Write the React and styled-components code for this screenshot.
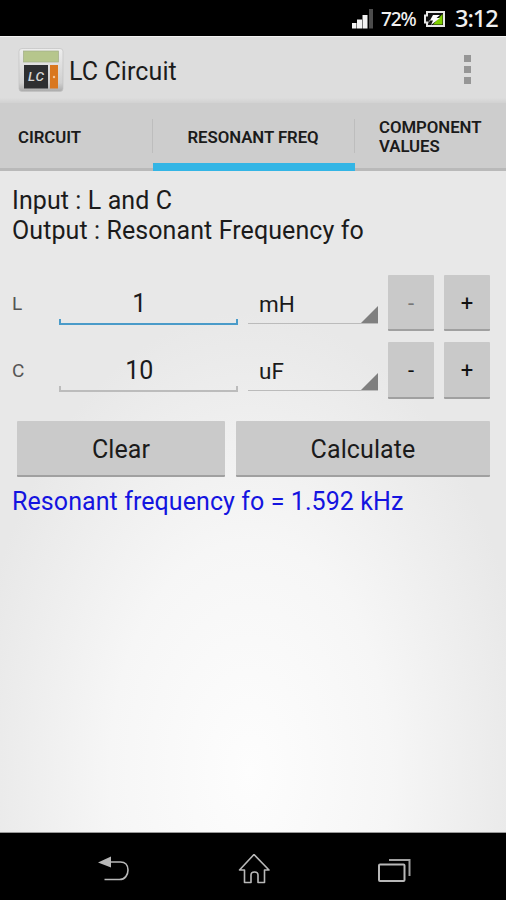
import styled, { createGlobalStyle } from "styled-components";
import { useState } from "react";

const tabs = [
    { id: "circuit", label: "CIRCUIT", width: 153, pad: 18 },
    { id: "freq", label: "RESONANT FREQ", width: 202, pad: 34.5 },
    { id: "values", label: "COMPONENT VALUES", width: 151, pad: 24 },
];

export default function App(){
    const [tab,setTab] = useState("freq");
    return(
    <>
        <GlobalStyle/>
        <Phone>
            <StatusBar>
                <Signal/>
                <Percent>72%</Percent>
                <Battery/>
                <Clock>3:12</Clock>
            </StatusBar>
            <ActionBar>
                <Logo/>
                <Title>LC Circuit</Title>
                <Overflow><Dot/><Dot/><Dot/></Overflow>
            </ActionBar>
            <Tabs>
                {tabs.map((t)=>(
                    <Tab key={t.id} $w={t.width} $pad={t.pad} $active={tab===t.id} onClick={()=>{setTab(t.id)}}>
                        <TabLabel>{t.label}</TabLabel>
                    </Tab>
                ))}
            </Tabs>
            <Content>
                <Intro>Input : L and C<br/>Output : Resonant Frequency fo</Intro>
                <Rows>
                    <ValueRow name="L" value="1" unit="mH" focused dimMinus/>
                    <ValueRow name="C" value="10" unit="uF"/>
                </Rows>
                <Actions>
                    <Button>Clear</Button>
                    <Button>Calculate</Button>
                </Actions>
                <Result>Resonant frequency fo = 1.592 kHz</Result>
            </Content>
            <NavBar>
                <NavIcons/>
            </NavBar>
        </Phone>
    </>
    );
}

function ValueRow({name,value,unit,focused,dimMinus}){
    return(
        <Row>
            <Name>{name}</Name>
            <Field $focused={focused}>
                <Value>{value}</Value>
                <Bracket/>
            </Field>
            <Spinner>
                <Unit>{unit}</Unit>
                <Corner viewBox="0 0 16 16"><path d="M16 0V16H0Z" fill="#7f7f7f"/></Corner>
            </Spinner>
            <Step $dim={dimMinus}>-</Step>
            <Step>+</Step>
        </Row>
    );
}

function Signal(){
    return(
        <svg width="22" height="21" viewBox="0 0 22 21">
            <path d="M0 15h4.5v5.5H0z M5 11.5H10v9H5z M10.500 7h5v13.5h-5z" fill="#f2f2f2"/>
            <path d="M17 1h4v19.5h-4z" fill="#4c4c4c"/>
        </svg>
    );
}

function Battery(){
    return(
        <BatterySvg width="23" height="18" viewBox="0 0 23 18">
            <path d="M4 2H21V16H4V12.500H2V5.500H4Z" fill="#111" stroke="#e8e8e8" strokeWidth="2"/>
            <path d="M19.500 4V14.500H10Z" fill="#7fd000"/>
            <path d="M5 14L10 5H17L13.500 8H17L8 15L10 10.500H6Z" fill="#fff"/>
        </BatterySvg>
    );
}

function Logo(){
    return(
        <LogoSvg width="46" height="46" viewBox="0 0 46 46">
            <defs>
                <linearGradient id="case" x1="0" y1="0" x2="0" y2="1">
                    <stop offset="0" stopColor="#eeeeee"/>
                    <stop offset=".8" stopColor="#d0d0d0"/>
                    <stop offset="1" stopColor="#aaaaaa"/>
                </linearGradient>
            </defs>
            <rect x="1" y="1.500" width="44" height="43" rx="3" fill="url(#case)" stroke="#c2c2c2" strokeWidth=".7"/>
            <rect x="5.500" y="4" width="35" height="11" fill="#b6c68c" stroke="#a2ad86" strokeWidth=".7"/>
            <rect x="6" y="18" width="24" height="23.500" fill="#2e2f31"/>
            <rect x="32" y="18" width="8" height="23.500" fill="#d9771f"/>
            <circle cx="36" cy="30" r="1.200" fill="#f6c79b"/>
            <text x="10" y="34" fontFamily="Roboto, sans-serif" fontSize="13.500" fontWeight="500" fontStyle="italic" textLength="16" fill="#d5d5d5">LC</text>
        </LogoSvg>
    );
}

function NavIcons(){
    return(
        <>
            <svg width="34" height="28" viewBox="0 0 34 28">
                <path d="M13 6H23.500C28 6 31 9 31 14S28 23.500 22.500 23.500H7.500" fill="none" stroke="#b8b8b8" strokeWidth="1.600"/>
                <path d="M1 6.500L14 .5V11.500Z" fill="#b8b8b8"/>
            </svg>
            <svg width="34" height="32" viewBox="0 0 34 32">
                <path d="M16 .5L31 16H26.500V28.500H20V21Q20 18 16.500 18T13 21V28.500H6.500V16H1.500Z" fill="none" stroke="#b8b8b8" strokeWidth="1.600" strokeLinejoin="round"/>
            </svg>
            <svg width="34" height="26" viewBox="0 0 34 26">
                <rect x="1" y="7.500" width="25.500" height="16.500" rx="1" fill="none" stroke="#b8b8b8" strokeWidth="2"/>
                <path d="M11 3H31.500V19" fill="none" stroke="#a0a0a0" strokeWidth="2"/>
            </svg>
        </>
    );
}

const GlobalStyle=createGlobalStyle`
    *{
        box-sizing: border-box;
    }
    body{
        margin: 0;
        background: #000;
        font-family: Roboto, "Liberation Sans", sans-serif;
    }
    button{
        font-family: inherit;
        border: 0;
        padding: 0;
    }
`
const Phone=styled.div`
    width: 506px;
    height: 900px;
    display: flex;
    flex-direction: column;
    overflow: hidden;
    color: #1b1b1b;
`
const StatusBar=styled.header`
    height: 36px;
    display: flex;
    align-items: center;
    justify-content: flex-end;
    padding-right: 7px;
    background: #000;
    color: #f0f0f0;
    font-family: "Noto Sans", sans-serif;
    font-weight: 500;
`
const Percent=styled.span`
    width: 35px;
    margin-left: 7px;
    padding-top: 1px;
    font-size: 19px;
    letter-spacing: -1.100px;
    white-space: nowrap;
`
const BatterySvg=styled.svg`
    margin-left: 7px;
    margin-top: 1px;
`
const Clock=styled.span`
    width: 44px;
    margin-left: 9px;
    font-size: 23.500px;
    letter-spacing: -1px;
    white-space: nowrap;
`
const ActionBar=styled.div`
    height: 67px;
    display: flex;
    align-items: center;
    padding: 0 34px 0 18px;
    background: linear-gradient(#ddd 92%, #d2d2d2);
    border-top: 1px solid #f2f2f2;
`
const LogoSvg=styled.svg`
    flex: none;
`
const Title=styled.h1`
    margin: 3px auto 0 5px;
    font-size: 25px;
    font-weight: 400;
    letter-spacing: .1px;
`
const Overflow=styled.div`
    display: flex;
    flex-direction: column;
    gap: 4px;
    padding-right: 1px;
    padding-bottom: 2px;
`
const Dot=styled.span`
    width: 7px;
    height: 7px;
    background: #969696;
`
const Tabs=styled.nav`
    height: 68px;
    display: flex;
    background: #cdcdcd;
`
const Tab=styled.button`
    width: ${({$w})=>$w}px;
    height: 68px;
    display: flex;
    align-items: center;
    padding-left: ${({$pad})=>$pad}px;
    padding-top: ${({$active})=>($active?"9px":"4px")};
    text-align: left;
    color: #1b1b1b;
    border-bottom: ${({$active})=>($active?"8px solid #33b5e5":"3px solid #b9b9b9")};
    background: linear-gradient(#bdbdbd,#bdbdbd) right 0 top 16px / 1px 34px no-repeat;
    &:last-child{
        background: none;
        padding-top: 2px;
    }
`
const TabLabel=styled.span`
    font-size: 16.800px;
    font-weight: 600;
    line-height: 19px;
    letter-spacing: -.05px;
`
const Content=styled.main`
    height: 662px;
    padding: 15px 16px 0 12px;
    background: radial-gradient(ellipse 280px 460px at 250px 600px, #fdfdfd, #f6f6f6 50%, #e8e8e8);
    border-bottom: 1px solid #999;
`
const Intro=styled.p`
    margin: 0;
    height: 88.500px;
    font-size: 25px;
    line-height: 29.500px;
    letter-spacing: .09px;
`
const Rows=styled.section`
    display: flex;
    flex-direction: column;
    gap: 11px;
`
const Row=styled.div`
    height: 56.500px;
    display: grid;
    grid-template-columns: 36.500px 179.500px 130px 46px 46px;
    column-gap: 10px;
`
const Name=styled.span`
    align-self: center;
    padding-top: 1px;
    font-size: 19px;
    color: #555;
`
const Field=styled.div`
    display: flex;
    flex-direction: column;
    height: 50px;
    color: ${({$focused})=>($focused?"#4a9bc9":"#bcbcbc")};
`
const Value=styled.span`
    flex: 1;
    padding-top: 14px;
    padding-right: 18px;
    text-align: center;
    font-size: 25px;
    line-height: 30px;
    color: #1b1b1b;
`
const Bracket=styled.span`
    height: 6px;
    flex: none;
    border: solid currentColor;
    border-width: 0 2px 2px;
`
const Spinner=styled.div`
    display: flex;
    height: 49px;
    justify-content: space-between;
    align-items: flex-end;
    border-bottom: 1px solid #bbb;
`
const Unit=styled.span`
    padding-left: 11px;
    font-size: 22.500px;
    line-height: 37px;
`
const Corner=styled.svg`
    width: 17px;
    height: 17px;
`
const Step=styled.button`
    padding-top: 3px;
    background: #c9c9c9;
    border-bottom: 2px solid #a0a0a0;
    border-radius: 1px;
    font-size: 22px;
    color: ${({$dim})=>($dim?"#777":"#111")};
`
const Actions=styled.div`
    height: 56px;
    margin: 22px 0 0 5px;
    display: grid;
    grid-template-columns: 208px 254px;
    column-gap: 11px;
`
const Button=styled.button`
    padding-top: 4px;
    background: #cacaca;
    border-bottom: 2px solid #a0a0a0;
    border-radius: 1px;
    font-size: 25px;
    letter-spacing: .1px;
    color: #1b1b1b;
`
const Result=styled.p`
    margin: 10px 0 0;
    font-size: 25px;
    line-height: 30px;
    letter-spacing: .08px;
    color: #1414e0;
`
const NavBar=styled.footer`
    height: 67px;
    display: flex;
    align-items: center;
    justify-content: space-between;
    padding: 6px 94px 0 97px;
    background: #000;
`
